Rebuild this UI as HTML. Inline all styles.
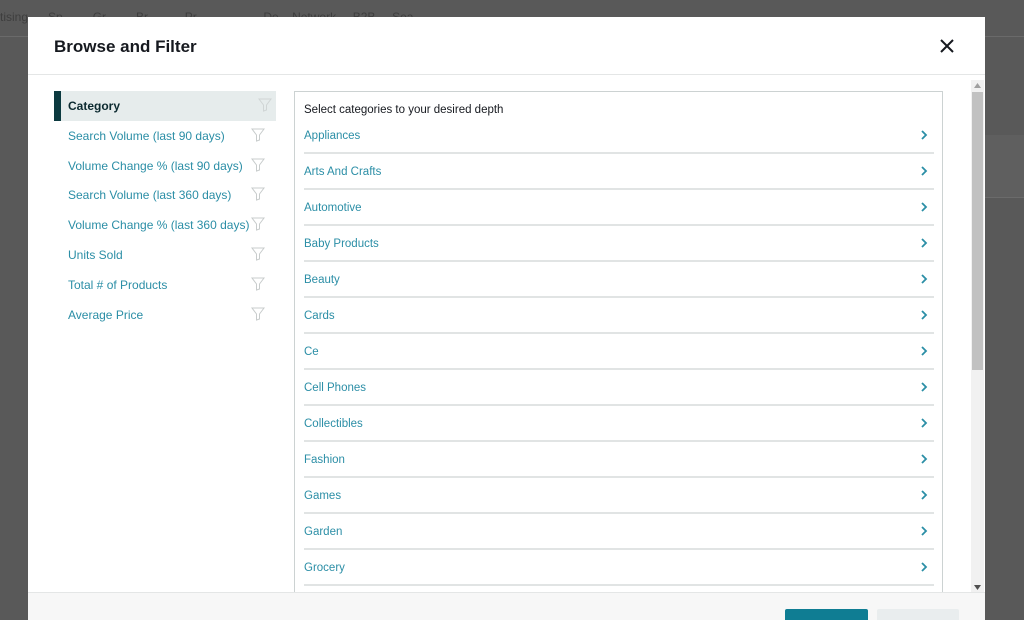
<!DOCTYPE html>
<html style="width:1024px;height:620px;overflow:hidden"><head><style>
*{margin:0;padding:0;box-sizing:border-box}
body{width:1024px;height:620px;background:#595959;font-family:"Liberation Sans",sans-serif;position:relative;overflow:hidden}
.topnav{position:absolute;left:0;top:0;width:1024px;height:37px;border-bottom:1px solid #6a6a6a;color:#3e3e3e;font-size:12px;padding:10px 0 0 0;white-space:nowrap}
.band{position:absolute;left:985px;top:135px;width:39px;height:63px;background:#5f5f5f;border-bottom:1px solid #6b6b6b}
.modal{position:absolute;left:28px;top:17px;width:957px;height:603px;background:#fff;overflow:hidden}
.hdr{height:58px;border-bottom:1px solid #e4e6e6;position:relative}
.hdr h1{position:absolute;left:26px;top:20px;font-size:17px;color:#16191f;font-weight:bold}
.x{position:absolute;left:910px;top:20px}
.left{position:absolute;left:26px;top:74px;width:222px}
.li{height:29.8px;line-height:30px;font-size:12px;color:#2b8ea6;padding-left:14px;position:relative}
.li.sel{background:#e6ecec;color:#0c2a30;font-weight:bold;border-left:7px solid #0c3a40;padding-left:7px}
.li svg{position:absolute;left:197px;top:7px}
.panel{position:absolute;left:266px;top:74px;width:649px;height:520px;border:1px solid #ccd2d2;border-bottom:none}
.ptitle{position:absolute;left:9px;top:12px;font-size:11.5px;color:#16191f}
.row{position:absolute;left:9px;width:630px;height:36px;border-bottom:2px solid #e1e4e4;font-size:11.5px;color:#2b8ea6;line-height:36px}
.row svg{position:absolute;right:6px;top:12px}
.sb{position:absolute;left:943px;top:63px;width:13px;height:513px;background:#f1f1f1}
.thumb{position:absolute;left:1px;top:12px;width:11px;height:278px;background:#c1c1c1}
.foot{position:absolute;left:0;top:575px;width:957px;height:28px;background:#f7f7f7;border-top:1px solid #e4e6e6}
.b1{position:absolute;left:757px;top:16px;width:83px;height:20px;background:#0f7d93;border-radius:2px}
.b2{position:absolute;left:849px;top:16px;width:82px;height:20px;background:#e9edee;border-radius:2px}
</style></head><body>
<div class="topnav">tising&nbsp;&nbsp;&nbsp;&nbsp;&nbsp;&nbsp;Sp&nbsp;&nbsp;&nbsp;&nbsp;&nbsp;&nbsp;&nbsp;&nbsp;&nbsp;Gr&nbsp;&nbsp;&nbsp;&nbsp;&nbsp;&nbsp;&nbsp;&nbsp;&nbsp;Br&nbsp;&nbsp;&nbsp;&nbsp;&nbsp;&nbsp;&nbsp;&nbsp;&nbsp;&nbsp;&nbsp;Pr&nbsp;&nbsp;&nbsp;&nbsp;&nbsp;&nbsp;&nbsp;&nbsp;&nbsp;&nbsp;&nbsp;&nbsp;&nbsp;&nbsp;&nbsp;&nbsp;&nbsp;&nbsp;&nbsp;&nbsp;De&nbsp;&nbsp;&nbsp;&nbsp;Network&nbsp;&nbsp;&nbsp;&nbsp;&nbsp;B2B&nbsp;&nbsp;&nbsp;&nbsp;&nbsp;Sea</div>
<div class="band"></div>
<div class="modal">
<div class="hdr"><h1>Browse and Filter</h1>
<svg class="x" width="18" height="18" viewBox="0 0 18 18"><path d="M3 3L15 15M15 3L3 15" stroke="#16191f" stroke-width="2"/></svg></div>
<div class="left">
<div class="li sel">Category<svg width="14" height="14" viewBox="0 0 14 14"><path d="M1 1H13L8.5 7V12L5.5 13V7Z" fill="none" stroke="#d0d5d5" stroke-width="1"/></svg></div>
<div class="li">Search Volume (last 90 days)<svg width="14" height="14" viewBox="0 0 14 14"><path d="M1 1H13L8.5 7V12L5.5 13V7Z" fill="none" stroke="#c8cccc" stroke-width="1"/></svg></div>
<div class="li">Volume Change % (last 90 days)<svg width="14" height="14" viewBox="0 0 14 14"><path d="M1 1H13L8.5 7V12L5.5 13V7Z" fill="none" stroke="#c8cccc" stroke-width="1"/></svg></div>
<div class="li">Search Volume (last 360 days)<svg width="14" height="14" viewBox="0 0 14 14"><path d="M1 1H13L8.5 7V12L5.5 13V7Z" fill="none" stroke="#c8cccc" stroke-width="1"/></svg></div>
<div class="li">Volume Change % (last 360 days)<svg width="14" height="14" viewBox="0 0 14 14"><path d="M1 1H13L8.5 7V12L5.5 13V7Z" fill="none" stroke="#c8cccc" stroke-width="1"/></svg></div>
<div class="li">Units Sold<svg width="14" height="14" viewBox="0 0 14 14"><path d="M1 1H13L8.5 7V12L5.5 13V7Z" fill="none" stroke="#c8cccc" stroke-width="1"/></svg></div>
<div class="li">Total # of Products<svg width="14" height="14" viewBox="0 0 14 14"><path d="M1 1H13L8.5 7V12L5.5 13V7Z" fill="none" stroke="#c8cccc" stroke-width="1"/></svg></div>
<div class="li">Average Price<svg width="14" height="14" viewBox="0 0 14 14"><path d="M1 1H13L8.5 7V12L5.5 13V7Z" fill="none" stroke="#c8cccc" stroke-width="1"/></svg></div>
</div>
<div class="panel">
<div class="ptitle">Select categories to your desired depth</div>
<div class="row" style="top:26px">Appliances<svg width="8" height="10" viewBox="0 0 8 10"><path d="M2 1L6 5L2 9" fill="none" stroke="#2b8ea6" stroke-width="1.8"/></svg></div>
<div class="row" style="top:62px">Arts And Crafts<svg width="8" height="10" viewBox="0 0 8 10"><path d="M2 1L6 5L2 9" fill="none" stroke="#2b8ea6" stroke-width="1.8"/></svg></div>
<div class="row" style="top:98px">Automotive<svg width="8" height="10" viewBox="0 0 8 10"><path d="M2 1L6 5L2 9" fill="none" stroke="#2b8ea6" stroke-width="1.8"/></svg></div>
<div class="row" style="top:134px">Baby Products<svg width="8" height="10" viewBox="0 0 8 10"><path d="M2 1L6 5L2 9" fill="none" stroke="#2b8ea6" stroke-width="1.8"/></svg></div>
<div class="row" style="top:170px">Beauty<svg width="8" height="10" viewBox="0 0 8 10"><path d="M2 1L6 5L2 9" fill="none" stroke="#2b8ea6" stroke-width="1.8"/></svg></div>
<div class="row" style="top:206px">Cards<svg width="8" height="10" viewBox="0 0 8 10"><path d="M2 1L6 5L2 9" fill="none" stroke="#2b8ea6" stroke-width="1.8"/></svg></div>
<div class="row" style="top:242px">Ce<svg width="8" height="10" viewBox="0 0 8 10"><path d="M2 1L6 5L2 9" fill="none" stroke="#2b8ea6" stroke-width="1.8"/></svg></div>
<div class="row" style="top:278px">Cell Phones<svg width="8" height="10" viewBox="0 0 8 10"><path d="M2 1L6 5L2 9" fill="none" stroke="#2b8ea6" stroke-width="1.8"/></svg></div>
<div class="row" style="top:314px">Collectibles<svg width="8" height="10" viewBox="0 0 8 10"><path d="M2 1L6 5L2 9" fill="none" stroke="#2b8ea6" stroke-width="1.8"/></svg></div>
<div class="row" style="top:350px">Fashion<svg width="8" height="10" viewBox="0 0 8 10"><path d="M2 1L6 5L2 9" fill="none" stroke="#2b8ea6" stroke-width="1.8"/></svg></div>
<div class="row" style="top:386px">Games<svg width="8" height="10" viewBox="0 0 8 10"><path d="M2 1L6 5L2 9" fill="none" stroke="#2b8ea6" stroke-width="1.8"/></svg></div>
<div class="row" style="top:422px">Garden<svg width="8" height="10" viewBox="0 0 8 10"><path d="M2 1L6 5L2 9" fill="none" stroke="#2b8ea6" stroke-width="1.8"/></svg></div>
<div class="row" style="top:458px">Grocery<svg width="8" height="10" viewBox="0 0 8 10"><path d="M2 1L6 5L2 9" fill="none" stroke="#2b8ea6" stroke-width="1.8"/></svg></div>
</div>
<div class="sb"><svg style="position:absolute;left:3px;top:3px" width="7" height="5"><path d="M0 5L3.5 0L7 5Z" fill="#a0a0a0"/></svg><div class="thumb"></div><svg style="position:absolute;left:3px;top:505px" width="7" height="5"><path d="M0 0L3.5 5L7 0Z" fill="#505050"/></svg></div>
<div class="foot"><div class="b1"></div><div class="b2"></div></div>
</div>
</body></html>
